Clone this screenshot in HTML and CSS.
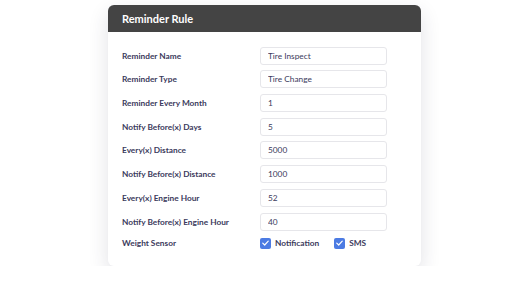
FILE: index.html
```html
<!DOCTYPE html>
<html>
<head>
    <title>Reminder Rule</title>
    <link rel="stylesheet" href="styles.css">
</head>
<body>
    <div class="card">
        <div class="card-header">Reminder Rule</div>
        <div class="card-body">
            <label class="field-label">Reminder Name</label>
            <input class="field-input" type="text" value="Tire Inspect">

            <label class="field-label">Reminder Type</label>
            <input class="field-input" type="text" value="Tire Change">

            <label class="field-label">Reminder Every Month</label>
            <input class="field-input" type="text" value="1">

            <label class="field-label">Notify Before(x) Days</label>
            <input class="field-input" type="text" value="5">

            <label class="field-label">Every(x) Distance</label>
            <input class="field-input" type="text" value="5000">

            <label class="field-label">Notify Before(x) Distance</label>
            <input class="field-input" type="text" value="1000">

            <label class="field-label">Every(x) Engine Hour</label>
            <input class="field-input" type="text" value="52">

            <label class="field-label">Notify Before(x) Engine Hour</label>
            <input class="field-input" type="text" value="40">

            <label class="field-label sensor-label">Weight Sensor</label>
            <div class="checks">
                <label class="check">
                    <span class="box">
                        <svg viewBox="0 0 12 12" width="12" height="12"><path d="M3 6.2 L5.1 8.2 L9 4" fill="none" stroke="#fff" stroke-width="1.3" stroke-linecap="round" stroke-linejoin="round"/></svg>
                    </span>
                    Notification
                </label>
                <label class="check">
                    <span class="box">
                        <svg viewBox="0 0 12 12" width="12" height="12"><path d="M3 6.2 L5.1 8.2 L9 4" fill="none" stroke="#fff" stroke-width="1.3" stroke-linecap="round" stroke-linejoin="round"/></svg>
                    </span>
                    SMS
                </label>
            </div>
        </div>
    </div>
</body>
</html>
```

FILE: styles.css
```css
body {
    margin: 0;
    background-color: #fff;
    font-family: Lato, "Open Sans", sans-serif;
}
.card {
    width: 313px;
    margin: 5px 0 0 108px;
    background-color: #fff;
    border-radius: 6px;
    box-shadow: 0 8px 20px rgba(40, 40, 70, 0.14);
    overflow: hidden;
}
.card-header {
    height: 27px;
    background-color: #444;
    color: #fff;
    font-size: 11px;
    font-weight: bold;
    line-height: 27px;
    padding-left: 14px;
}
.card-body {
    display: grid;
    grid-template-columns: 138px 127px;
    row-gap: 5.7px;
    padding: 14.7px 14px 17px 14px;
    align-items: center;
}
.field-label {
    font-size: 8.3px;
    font-weight: bold;
    color: #3b3a5c;
}
.field-input {
    height: 18px;
    box-sizing: border-box;
    border: 1px solid #e6e6ea;
    border-radius: 3px;
    padding: 0 7px;
    font-family: inherit;
    font-size: 8.3px;
    color: #3b3a5c;
    margin: 0;
    outline: none;
}
.sensor-label {
    margin-top: 1px;
}
.checks {
    display: flex;
    gap: 15px;
    height: 12px;
    margin-top: 1px;
    align-items: center;
}
.check {
    display: flex;
    align-items: center;
    gap: 4px;
    font-size: 8.3px;
    font-weight: bold;
    color: #3b3a5c;
}
.box {
    width: 11px;
    height: 11px;
    border-radius: 2px;
    background-color: #4c7be3;
    display: flex;
    align-items: center;
    justify-content: center;
}
```
